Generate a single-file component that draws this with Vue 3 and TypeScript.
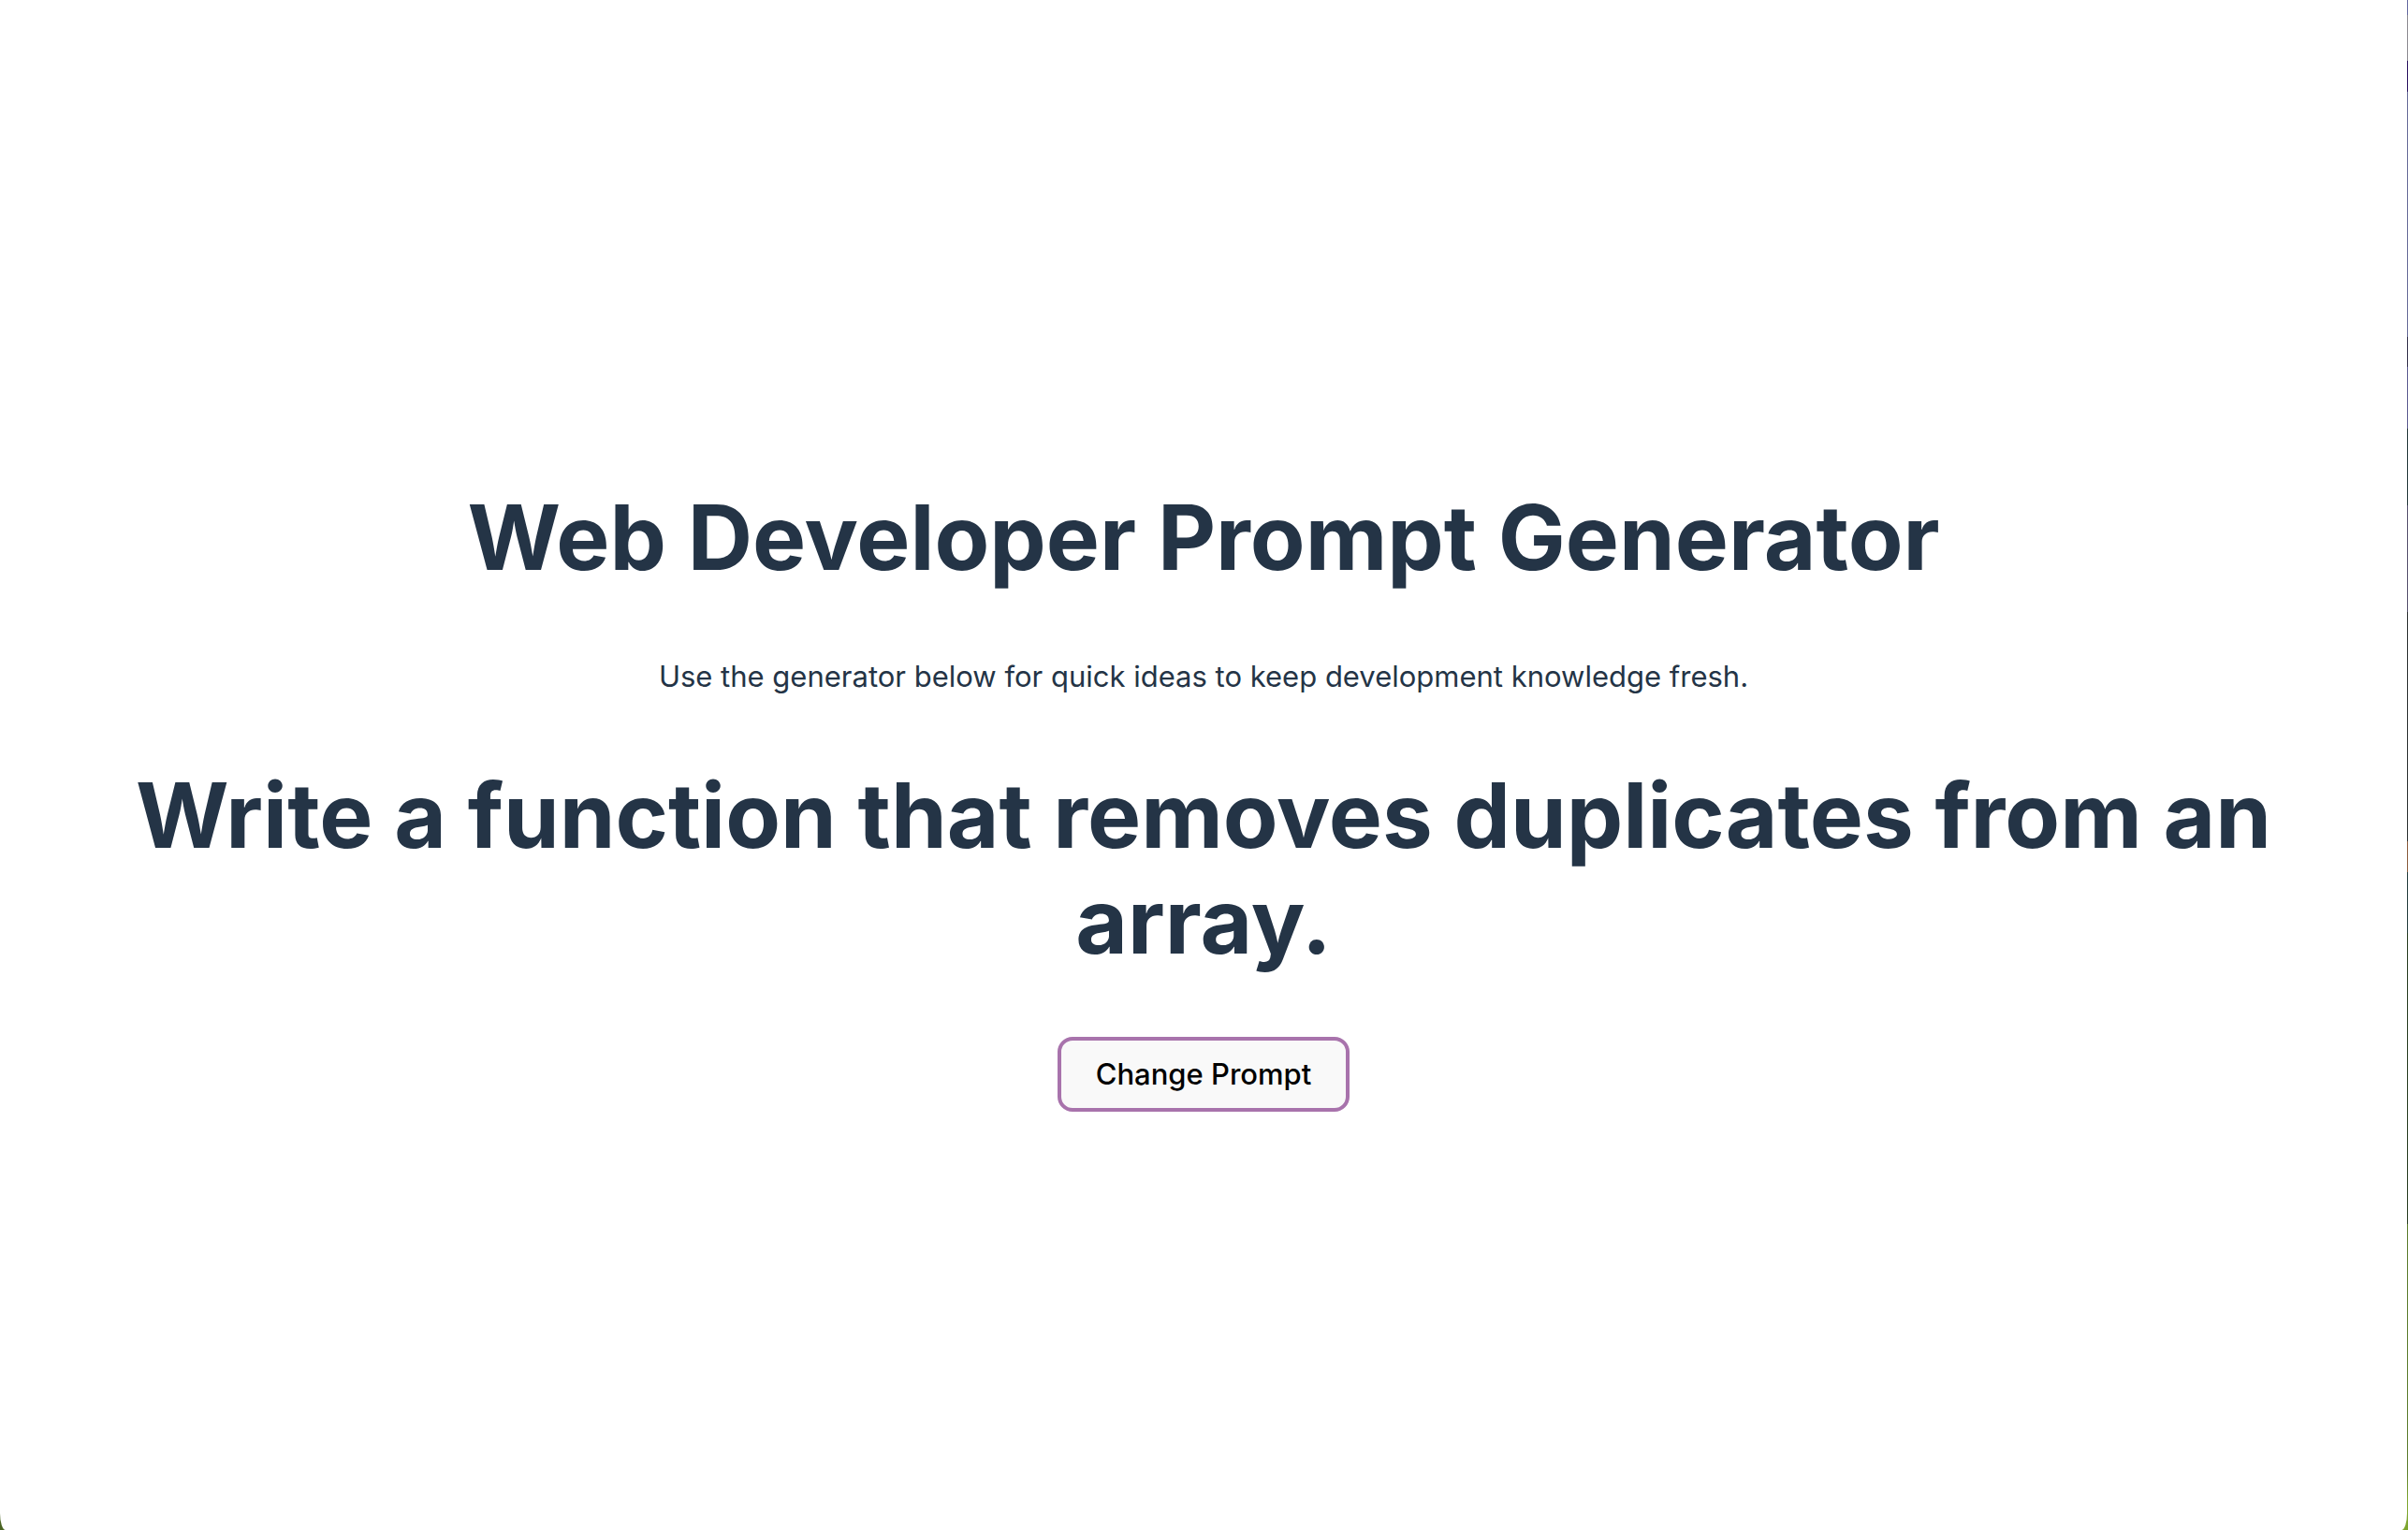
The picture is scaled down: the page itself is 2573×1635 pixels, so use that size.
<script setup lang="ts">
import { ref } from 'vue'

const prompts: string[] = [
  'Write a function that removes duplicates from an array.',
]
const index = ref(0)

function changePrompt(): void {
  index.value = (index.value + 1) % prompts.length
}
</script>

<template>
  <div class="desktop">
    <main class="page">
      <h1 class="heading">Web Developer Prompt Generator</h1>
      <p class="intro">Use the generator below for quick ideas to keep development knowledge fresh.</p>
      <h1 class="heading">{{ prompts[index] }}</h1>
      <button class="change" type="button" @click="changePrompt">Change Prompt</button>
    </main>
  </div>
</template>

<style>
body {
  background: #fff;
}
</style>

<style scoped>
/* Wallpaper showing at the window's right edge and lower corners */
.desktop {
  display: flex;
  min-height: 100vh;
  padding-right: 1px;
  background:
    linear-gradient(#4a6423, #4a6423) left / 50% 100% no-repeat,
    linear-gradient(
      #6468a0 0 1%,
      #8c8a90 1% 4%,
      #2a1260 4% 6%,
      #666a98 6% 22%,
      #33304a 22% 24%,
      #5c5a90 24% 28%,
      #24383a 28% 33%,
      #55506c 33% 40%,
      #2c3030 40% 55%,
      #8a5c3c 55% 57%,
      #243c3c 57% 61%,
      #283c20 61% 80%,
      #5c7c2c 80% 96%,
      #7ea62f 98%
    );
}

.page {
  box-sizing: border-box;
  flex: 1;
  padding: 70px 128px 0;
  display: flex;
  flex-direction: column;
  align-items: center;
  justify-content: center;
  border-radius: 0 0 6px 6px / 0 0 18px 18px;
  background: #fff;
  font-family: Inter, "Liberation Sans", sans-serif;
  color: #243446;
  text-align: center;
}

.heading {
  margin: 0;
  font-size: 96px;
  line-height: 113px;
  font-weight: 700;
}

.intro {
  margin: 67px 0;
  font-size: 31px;
  line-height: 50px;
}

.change {
  margin-top: 67px;
  padding: 17px 37px;
  border: 4px solid #a873ac;
  border-radius: 16px;
  background: #f9f9f9;
  color: #000;
  font: 500 31px/38px Inter, "Liberation Sans", sans-serif;
}
</style>
